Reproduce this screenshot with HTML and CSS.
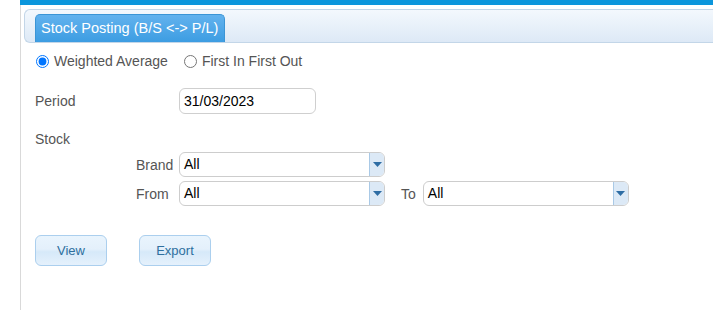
FILE: index.html
```html
<!DOCTYPE html>
<html>
  <head>
    <title>Stock Posting</title>
    <link rel="stylesheet" href="styles.css">
  </head>
  <body>
    <div class="page">
      <div class="topbar"></div>
      <div class="panel-head">
        <span class="tab">Stock Posting (B/S &lt;-&gt; P/L)</span>
      </div>
      <form class="form">
        <div class="radios">
          <label><input type="radio" name="method" checked /> Weighted Average</label>
          <label><input type="radio" name="method" /> First In First Out</label>
        </div>
        <div class="row period">
          <span class="label">Period</span>
          <input class="text" type="text" value="31/03/2023" />
        </div>
        <div class="stock">Stock</div>
        <div class="row sub">
          <span class="sublabel">Brand</span>
          <div class="combo"><span class="val">All</span><span class="arrow"><svg width="9" height="5" viewBox="0 0 9 5"><path d="M0 0h9L4.5 5z" fill="#2e6da4"/></svg></span></div>
        </div>
        <div class="row sub">
          <span class="sublabel">From</span>
          <div class="combo"><span class="val">All</span><span class="arrow"><svg width="9" height="5" viewBox="0 0 9 5"><path d="M0 0h9L4.5 5z" fill="#2e6da4"/></svg></span></div>
          <span class="to">To</span>
          <div class="combo"><span class="val">All</span><span class="arrow"><svg width="9" height="5" viewBox="0 0 9 5"><path d="M0 0h9L4.5 5z" fill="#2e6da4"/></svg></span></div>
        </div>
        <div class="buttons">
          <button type="button" class="btn">View</button>
          <button type="button" class="btn">Export</button>
        </div>
      </form>
    </div>
  </body>
</html>
```
FILE: styles.css
```css
body {
  margin: 0;
  font-family: "Liberation Sans", Arial, sans-serif;
  font-size: 14px;
  color: #555;
  background: #fff;
}
.page {
  margin-left: 20px;
  border-left: 1px solid #d9d9d9;
  height: 310px;
}
.topbar {
  height: 5px;
  margin-left: -1px;
  background: #0b96dc;
}
.panel-head {
  margin: 4px 0 0 3px;
  height: 32px;
  border: 1px solid #c3d6e8;
  border-right: none;
  border-radius: 6px 0 0 6px;
  background: linear-gradient(#f3f8fd, #dde9f6);
  display: flex;
  align-items: flex-end;
  padding-left: 10px;
}
.tab {
  height: 27px;
  line-height: 26px;
  padding: 0 5px;
  width: 178px;
  color: #fff;
  font-size: 14.5px;
  background: linear-gradient(#62b2ee, #3d9de2);
  border: 1px solid #3b95d6;
  border-bottom: none;
  border-radius: 5px 5px 0 0;
  white-space: nowrap;
}
.form {
  padding: 9px 0 0 14px;
}
.radios {
  display: flex;
  gap: 15px;
  height: 18px;
  align-items: center;
}
.radios label {
  display: flex;
  align-items: center;
  gap: 5px;
}
.radios input {
  margin: 0 0 0 1px;
  width: 13px;
  height: 13px;
  accent-color: #0075ff;
}
.row {
  display: flex;
  align-items: center;
}
.period {
  margin-top: 18px;
}
.label {
  width: 144px;
}
.text {
  box-sizing: border-box;
  width: 137px;
  height: 26px;
  border: 1px solid #cfcfcf;
  border-radius: 6px;
  padding: 0 4px;
  font-family: inherit;
  font-size: 14px;
  color: #000;
}
.stock {
  margin-top: 17px;
  height: 17px;
}
.sub {
  margin-top: 4px;
}
.sublabel {
  box-sizing: border-box;
  width: 144px;
  padding-left: 101px;
}
.combo {
  box-sizing: border-box;
  width: 206px;
  height: 25px;
  border: 1px solid #cdcdcd;
  border-radius: 6px;
  display: flex;
  overflow: hidden;
  color: #000;
}
.combo .val {
  flex: 1;
  padding-left: 4px;
  line-height: 23px;
}
.combo .arrow {
  width: 14px;
  border-left: 1px solid #a9c9e6;
  background: #dce9f6;
  display: flex;
  align-items: center;
  justify-content: center;
}
.to {
  margin: 0 7px 0 16px;
}
.buttons {
  display: flex;
  gap: 32px;
  margin-top: 29px;
}
.btn {
  width: 72px;
  height: 31px;
  border: 1px solid #abcfee;
  border-radius: 6px;
  background: linear-gradient(#e9f4fd 0%, #e4f0fb 45%, #d6e9f9 55%, #e5f1fc 100%);
  color: #2e6f9e;
  font-family: inherit;
  font-size: 13px;
}
```
